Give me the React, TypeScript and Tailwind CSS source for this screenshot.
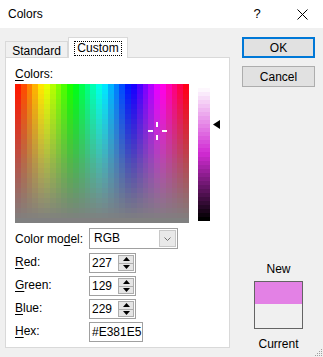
import React from 'react';

const SPEC_W = 174;
const SPEC_H = 139;
const COLS = 30;
const ROWS = 28;
const LUM_ROWS = 33;

function Spectrum() {
  const cells: React.ReactNode[] = [];
  const cw = SPEC_W / COLS;
  const rh = SPEC_H / ROWS;
  for (let c = 0; c < COLS; c++) {
    for (let r = 0; r < ROWS; r++) {
      const hue = ((c + 0.5) / COLS) * 360;
      const sat = 100 - (r / (ROWS - 1)) * 100;
      cells.push(
        <rect
          key={c + '-' + r}
          x={c * cw}
          y={r * rh}
          width={cw + 0.5}
          height={rh + 0.5}
          fill={`hsl(${hue}, ${sat}%, 50%)`}
        />
      );
    }
  }
  return (
    <svg width={SPEC_W} height={SPEC_H} shapeRendering="crispEdges" className="block">
      {cells}
      {/* crosshair */}
      <g fill="#ffffff">
        <rect x={133} y={46} width={5} height={2} />
        <rect x={147} y={46} width={5} height={2} />
        <rect x={141} y={38} width={2} height={5} />
        <rect x={141} y={51} width={2} height={5} />
      </g>
    </svg>
  );
}

function LumBar() {
  const rh = 133 / LUM_ROWS;
  return (
    <svg width={12} height={133} shapeRendering="crispEdges" className="block">
      {Array.from({ length: LUM_ROWS }).map((_, i) => (
        <rect
          key={i}
          x={0}
          y={i * rh}
          width={12}
          height={rh + 0.5}
          fill={`hsl(299, 66%, ${98 - (i / (LUM_ROWS - 1)) * 98}%)`}
        />
      ))}
    </svg>
  );
}

function Key({ children }: { children: React.ReactNode }) {
  return <span className="underline underline-offset-2">{children}</span>;
}

function SpinBox({ value }: { value: string }) {
  return (
    <div className="flex h-[20px] w-[47px] border border-[#a0a0a0] bg-white">
      <div className="flex-1 pl-[2px] text-[12px] leading-[18px]">{value}</div>
      <div className="flex w-[18px] flex-col p-[1px]">
        <div className="flex flex-1 items-center justify-center border border-[#adadad] bg-[#e5e5e5]">
          <svg width="7" height="4" viewBox="0 0 7 4">
            <path d="M0 4 L3.5 0 L7 4 Z" fill="#000" />
          </svg>
        </div>
        <div className="flex flex-1 items-center justify-center border border-t-0 border-[#adadad] bg-[#e5e5e5]">
          <svg width="7" height="4" viewBox="0 0 7 4">
            <path d="M0 0 L3.5 4 L7 0 Z" fill="#000" />
          </svg>
        </div>
      </div>
    </div>
  );
}

export default function App() {
  return (
    <div className="relative h-[357px] w-[323px] overflow-hidden bg-[#f0f0f0] font-['Segoe_UI','Liberation_Sans',sans-serif] text-[12px] text-black">
      {/* title bar */}
      <div className="flex h-[28px] items-center bg-white">
        <div className="pl-[8px] text-[12px]">Colors</div>
        <div className="ml-auto w-[12px] text-center text-[13px]">?</div>
        <div className="ml-[34px] mr-[15px]">
          <svg width="11" height="11" viewBox="0 0 11 11">
            <path d="M0.5 0.5 L10.5 10.5 M10.5 0.5 L0.5 10.5" stroke="#000" strokeWidth="1" />
          </svg>
        </div>
      </div>

      <div className="flex pl-[5px]">
        {/* left: tabs + panel */}
        <div className="w-[225px]">
          <div className="mt-[9px] flex h-[20px] items-end">
            <div className="flex h-[16px] w-[63px] items-center justify-center border border-b-0 border-[#d9d9d9] bg-[#f0f0f0] pt-[2px]">
              Standard
            </div>
            <div className="relative z-10 -mb-px flex h-[21px] w-[60px] items-center justify-center border border-b-0 border-[#d9d9d9] bg-white">
              <span className="border border-dotted border-black px-[2px] leading-[13px]">Custom</span>
            </div>
          </div>
          <div className="h-[291px] border border-[#d9d9d9] bg-white px-[9px] pt-[8px]">
            <div className="leading-[16px]">
              <Key>C</Key>olors:
            </div>
            <div className="mt-[2px] flex items-start">
              <Spectrum />
              <div className="ml-[9px] mt-[4px]">
                <LumBar />
              </div>
              <div className="ml-[3px] mt-[36px]">
                <svg width="7" height="9" viewBox="0 0 7 9">
                  <path d="M0 4.5 L7 0 L7 9 Z" fill="#000" />
                </svg>
              </div>
            </div>

            <div className="mt-[5px] flex h-[21px] items-center">
              <div className="w-[74px]">
                Color mo<Key>d</Key>el:
              </div>
              <div className="flex h-[21px] w-[89px] border border-[#a0a0a0] bg-white">
                <div className="flex-1 pl-[4px] leading-[19px]">RGB</div>
                <div className="m-[1px] flex w-[17px] items-center justify-center border border-[#c8c8c8] bg-[#e9e9e9]">
                  <svg width="7" height="4" viewBox="0 0 7 4">
                    <path d="M0.5 0.5 L3.5 3.5 L6.5 0.5" stroke="#707070" fill="none" strokeWidth="1" />
                  </svg>
                </div>
              </div>
            </div>

            <div className="mt-[4px] flex flex-col gap-[3px]">
              <div className="flex h-[20px] items-center">
                <div className="w-[74px] self-start">
                  <Key>R</Key>ed:
                </div>
                <SpinBox value="227" />
              </div>
              <div className="flex h-[20px] items-center">
                <div className="w-[74px] self-start">
                  <Key>G</Key>reen:
                </div>
                <SpinBox value="129" />
              </div>
              <div className="flex h-[20px] items-center">
                <div className="w-[74px] self-start">
                  <Key>B</Key>lue:
                </div>
                <SpinBox value="229" />
              </div>
              <div className="flex h-[20px] items-center">
                <div className="w-[74px] self-start">
                  <Key>H</Key>ex:
                </div>
                <div className="h-[20px] w-[54px] border border-[#a0a0a0] bg-white pl-[2px] leading-[18px]">
                  #E381E5
                </div>
              </div>
            </div>
          </div>
        </div>

        {/* right column */}
        <div className="ml-[12px] flex h-[329px] w-[73px] flex-col items-center">
          <div className="mt-[9px] flex h-[21px] w-[73px] items-center justify-center border-2 border-[#0078d7] bg-[#e1e1e1]">
            OK
          </div>
          <div className="mt-[8px] flex h-[21px] w-[73px] items-center justify-center border border-[#adadad] bg-[#e1e1e1]">
            Cancel
          </div>
          <div className="mt-auto leading-[16px]">New</div>
          <div className="mt-[4px] flex h-[48px] w-[49px] flex-col border border-[#646464]">
            <div className="h-[22px] bg-[#e381e5]" />
            <div className="flex-1 bg-[#f0f0f0]" />
          </div>
          <div className="mb-[5px] mt-[7px] leading-[16px]">Current</div>
        </div>
      </div>

      {/* resize grip */}
      <svg className="absolute bottom-0 right-0" width="10" height="10" viewBox="0 0 10 10">
        <g fill="#a0a0a0">
          <rect x="8" y="2" width="1" height="1" />
          <rect x="6" y="4" width="1" height="1" />
          <rect x="8" y="4" width="1" height="1" />
          <rect x="4" y="6" width="1" height="1" />
          <rect x="6" y="6" width="1" height="1" />
          <rect x="8" y="6" width="1" height="1" />
          <rect x="2" y="8" width="1" height="1" />
          <rect x="4" y="8" width="1" height="1" />
          <rect x="6" y="8" width="1" height="1" />
          <rect x="8" y="8" width="1" height="1" />
        </g>
      </svg>
    </div>
  );
}
